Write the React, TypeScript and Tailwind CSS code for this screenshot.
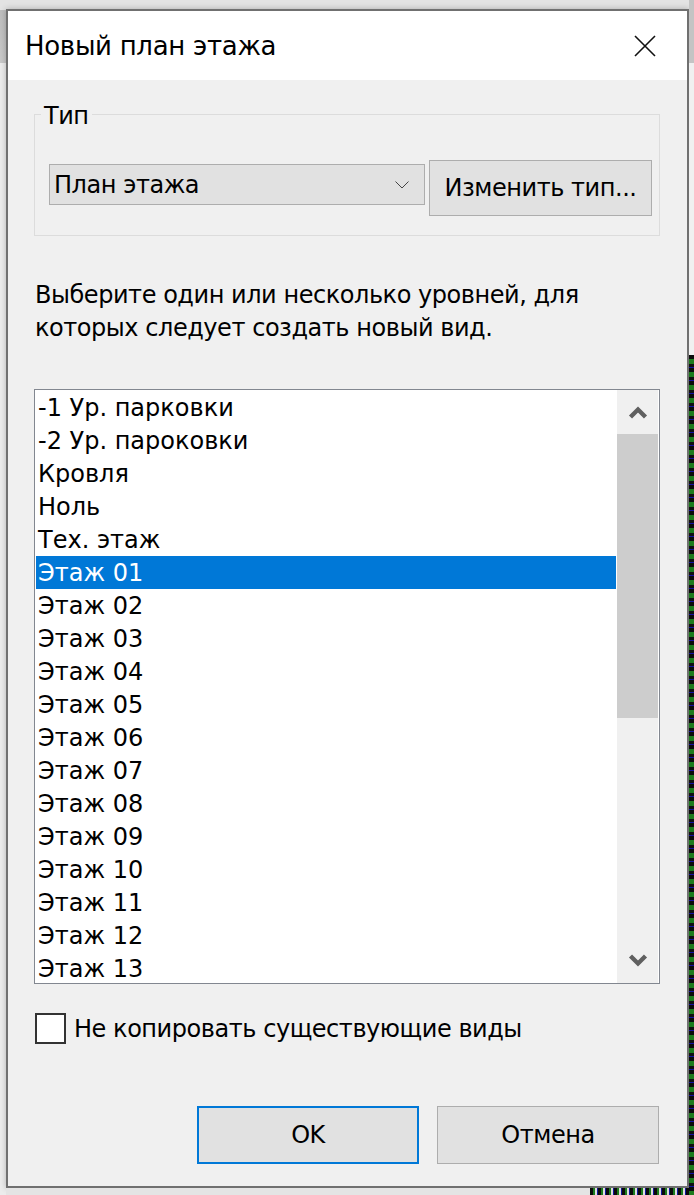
import { useState } from "react"

const levels = [
  "-1 Ур. парковки",
  "-2 Ур. пароковки",
  "Кровля",
  "Ноль",
  "Тех. этаж",
  "Этаж 01",
  "Этаж 02",
  "Этаж 03",
  "Этаж 04",
  "Этаж 05",
  "Этаж 06",
  "Этаж 07",
  "Этаж 08",
  "Этаж 09",
  "Этаж 10",
  "Этаж 11",
  "Этаж 12",
  "Этаж 13",
]

const font = "font-['DejaVu_Sans',sans-serif]"

const ScrollArrow = ({ up }: { up?: boolean }) => (
  <svg width="20" height="14" viewBox="0 0 20 14">
    <polyline points={up ? "2.5,12 10,4.5 17.5,12" : "2.5,2 10,9.5 17.5,2"} fill="none" stroke="#606060" strokeWidth="4.4" />
  </svg>
)

const App = () => {
  const [selected, setSelected] = useState("Этаж 01")
  const [noCopy, setNoCopy] = useState(false)

  return (
    <div className={`flex h-[1195px] w-[694px] overflow-hidden bg-[linear-gradient(180deg,#e3e3e3_0px,#e3e3e3_10px,#bdbdbd_10px,#c9c9c9_63px,#ececec_63px)] text-black ${font}`}>
      <div className="w-[6px] shrink-0" />

      <div className="flex w-[683px] shrink-0 flex-col">
        <div className="h-[9px]" />

        {/* dialog window */}
        <div className="flex h-[1179px] flex-col border-2 border-[#707070] bg-[#f0f0f0] shadow-[0_0_6px_rgba(0,0,0,0.25)]">
          <div className="flex h-[69px] shrink-0 items-center justify-between bg-white pl-[17px] pr-[31px]">
            <span className="text-[26px] leading-none tracking-[-0.3px]">Новый план этажа</span>
            <svg width="22" height="22" viewBox="0 0 22 22">
              <path d="M1 1 L21 21 M21 1 L1 21" stroke="#111" strokeWidth="1.6" />
            </svg>
          </div>

          <div className="flex flex-col pl-[26px] pr-[27px] text-[24px] tracking-[-0.45px]">
            {/* type group */}
            <div className="relative mt-[34px] h-[122px] border border-[#dcdcdc]">
              <span className="absolute -top-[13px] left-[6px] bg-[#f0f0f0] px-[3px] leading-[28px]">Тип</span>
              <div className="flex items-start pl-[14px] pt-[45px]">
                <div className="mt-[4px] flex h-[41px] w-[376px] items-center justify-between border border-[#adadad] bg-[#e1e1e1] pl-[4px] pr-[15px]">
                  <span className="leading-none">План этажа</span>
                  <svg width="14" height="8" viewBox="0 0 14 8">
                    <polyline points="0.5,0.5 7,7 13.5,0.5" fill="none" stroke="#444" strokeWidth="1" />
                  </svg>
                </div>
                <button className="ml-[4px] flex h-[56px] w-[223px] items-center justify-center border border-[#adadad] bg-[#e1e1e1] leading-none">
                  Изменить тип...
                </button>
              </div>
            </div>

            <p className="mt-[43px] pl-[1px] leading-[33px]">
              Выберите один или несколько уровней, для
              <br />
              которых следует создать новый вид.
            </p>

            {/* levels list */}
            <div className="mt-[44px] flex h-[595px] border border-[#828790] bg-white tracking-normal">
              <div className="flex flex-1 flex-col overflow-hidden px-[1px] pt-[1px]">
                {levels.map((l) => (
                  <div
                    key={l}
                    onClick={() => setSelected(l)}
                    className={`flex h-[33px] shrink-0 items-center pl-[2px] leading-none ${l === selected ? "bg-[#0078d7] text-white" : ""}`}
                  >
                    {l}
                  </div>
                ))}
              </div>
              <div className="mr-[1px] flex w-[41px] shrink-0 flex-col bg-[#f0f0f0]">
                <div className="flex h-[44px] items-center justify-center">
                  <ScrollArrow up />
                </div>
                <div className="h-[284px] bg-[#cdcdcd]" />
                <div className="flex-1" />
                <div className="flex h-[44px] items-center justify-center">
                  <ScrollArrow />
                </div>
              </div>
            </div>

            <label className="mt-[29px] flex items-center" onClick={() => setNoCopy(!noCopy)}>
              <span className="ml-[1px] flex h-[31px] w-[31px] items-center justify-center border-2 border-[#333] bg-white">
                {noCopy && (
                  <svg width="20" height="16" viewBox="0 0 20 16">
                    <polyline points="2,8 7,13 18,2" fill="none" stroke="#222" strokeWidth="2.5" />
                  </svg>
                )}
              </span>
              <span className="ml-[8px] leading-none">Не копировать существующие виды</span>
            </label>

            <div className="mt-[62px] flex justify-end gap-[18px] pr-[1px]">
              <button className="flex h-[58px] w-[222px] items-center justify-center border-2 border-[#0078d7] bg-[#e1e1e1] leading-none">OK</button>
              <button className="flex h-[58px] w-[222px] items-center justify-center border border-[#adadad] bg-[#e1e1e1] leading-none">Отмена</button>
            </div>
          </div>
        </div>

        <div className="flex h-[7px]">
          <div className="w-[584px] bg-[#e4e4e4]" />
          <div className="flex-1 bg-[repeating-linear-gradient(90deg,#0b0b0b_0px,#0b0b0b_3px,#1d7b1d_3px,#1d7b1d_5px,#dddddd_5px,#dddddd_7px,#1414a0_7px,#1414a0_8px)]" />
        </div>
      </div>

      {/* neighbouring window edge */}
      <div className="flex w-[5px] shrink-0 flex-col">
        <div className="h-[63px] bg-[#c4c4c4]" />
        <div className="h-[292px] bg-[#f0f0f0]" />
        <div className="flex-1 bg-[repeating-linear-gradient(180deg,#0b0b0b_0px,#0b0b0b_4px,#1d7b1d_4px,#1d7b1d_9px,#101010_9px,#101010_12px,#1414a0_12px,#1414a0_13px)]" />
      </div>
    </div>
  )
}

export default App
